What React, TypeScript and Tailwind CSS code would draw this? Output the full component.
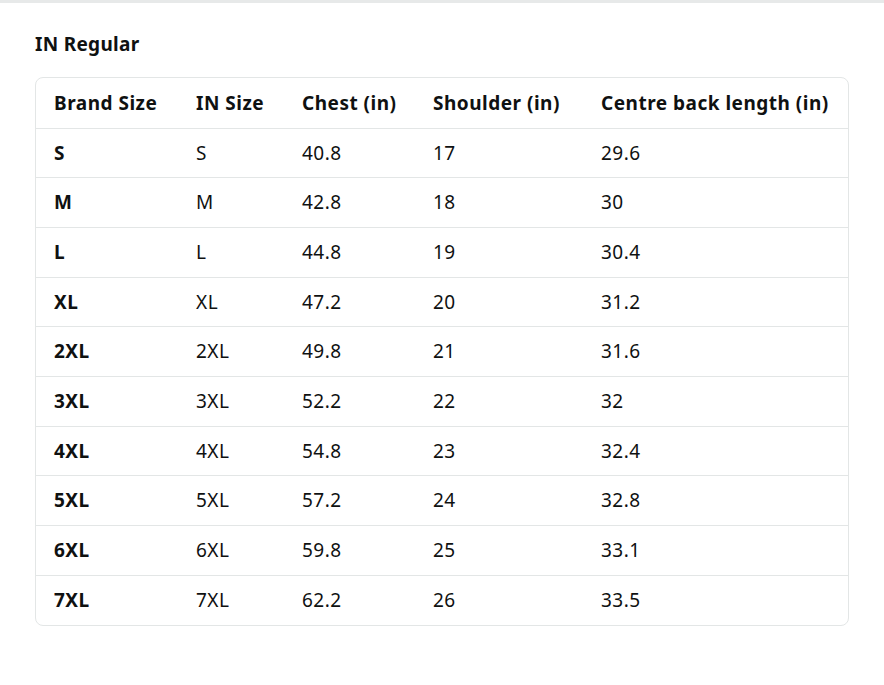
const rows = [
  ['S', 'S', '40.8', '17', '29.6'],
  ['M', 'M', '42.8', '18', '30'],
  ['L', 'L', '44.8', '19', '30.4'],
  ['XL', 'XL', '47.2', '20', '31.2'],
  ['2XL', '2XL', '49.8', '21', '31.6'],
  ['3XL', '3XL', '52.2', '22', '32'],
  ['4XL', '4XL', '54.8', '23', '32.4'],
  ['5XL', '5XL', '57.2', '24', '32.8'],
  ['6XL', '6XL', '59.8', '25', '33.1'],
  ['7XL', '7XL', '62.2', '26', '33.5'],
]

const headers = ['Brand Size', 'IN Size', 'Chest (in)', 'Shoulder (in)', 'Centre back length (in)']
const widths = ['w-[142px]', 'w-[106px]', 'w-[131px]', 'w-[168px]', 'w-[266px]']

export default function App() {
  return (
    <div className="min-h-[685px] w-[884px] bg-white font-['Noto_Sans',sans-serif] tracking-[0.5px] text-[#0f1111]">
      <div className="h-[3px] bg-[#e7e9e9]" />
      <div className="px-[35px] pt-[29px]">
        <h2 className="text-[19px] font-bold leading-6 tracking-[0.3px]">IN Regular</h2>
        <div className="mt-[21px] w-[814px] overflow-hidden rounded-lg border border-[#e3e6e6]">
          <table className="w-full table-fixed border-collapse whitespace-nowrap text-[19px]">
            <thead>
              <tr className="h-[50px]">
                {headers.map((h, i) => (
                  <th key={h} className={`${widths[i]} pl-[18px] pr-2 text-left font-bold`}>
                    {h}
                  </th>
                ))}
              </tr>
            </thead>
            <tbody>
              {rows.map((r) => (
                <tr key={r[0]} className="h-[49.7px] border-t border-[#e3e6e6]">
                  {r.map((c, i) => (
                    <td key={i} className={`pl-[18px] pr-2 ${i === 0 ? 'font-bold' : ''}`}>
                      {c}
                    </td>
                  ))}
                </tr>
              ))}
            </tbody>
          </table>
        </div>
      </div>
    </div>
  )
}
